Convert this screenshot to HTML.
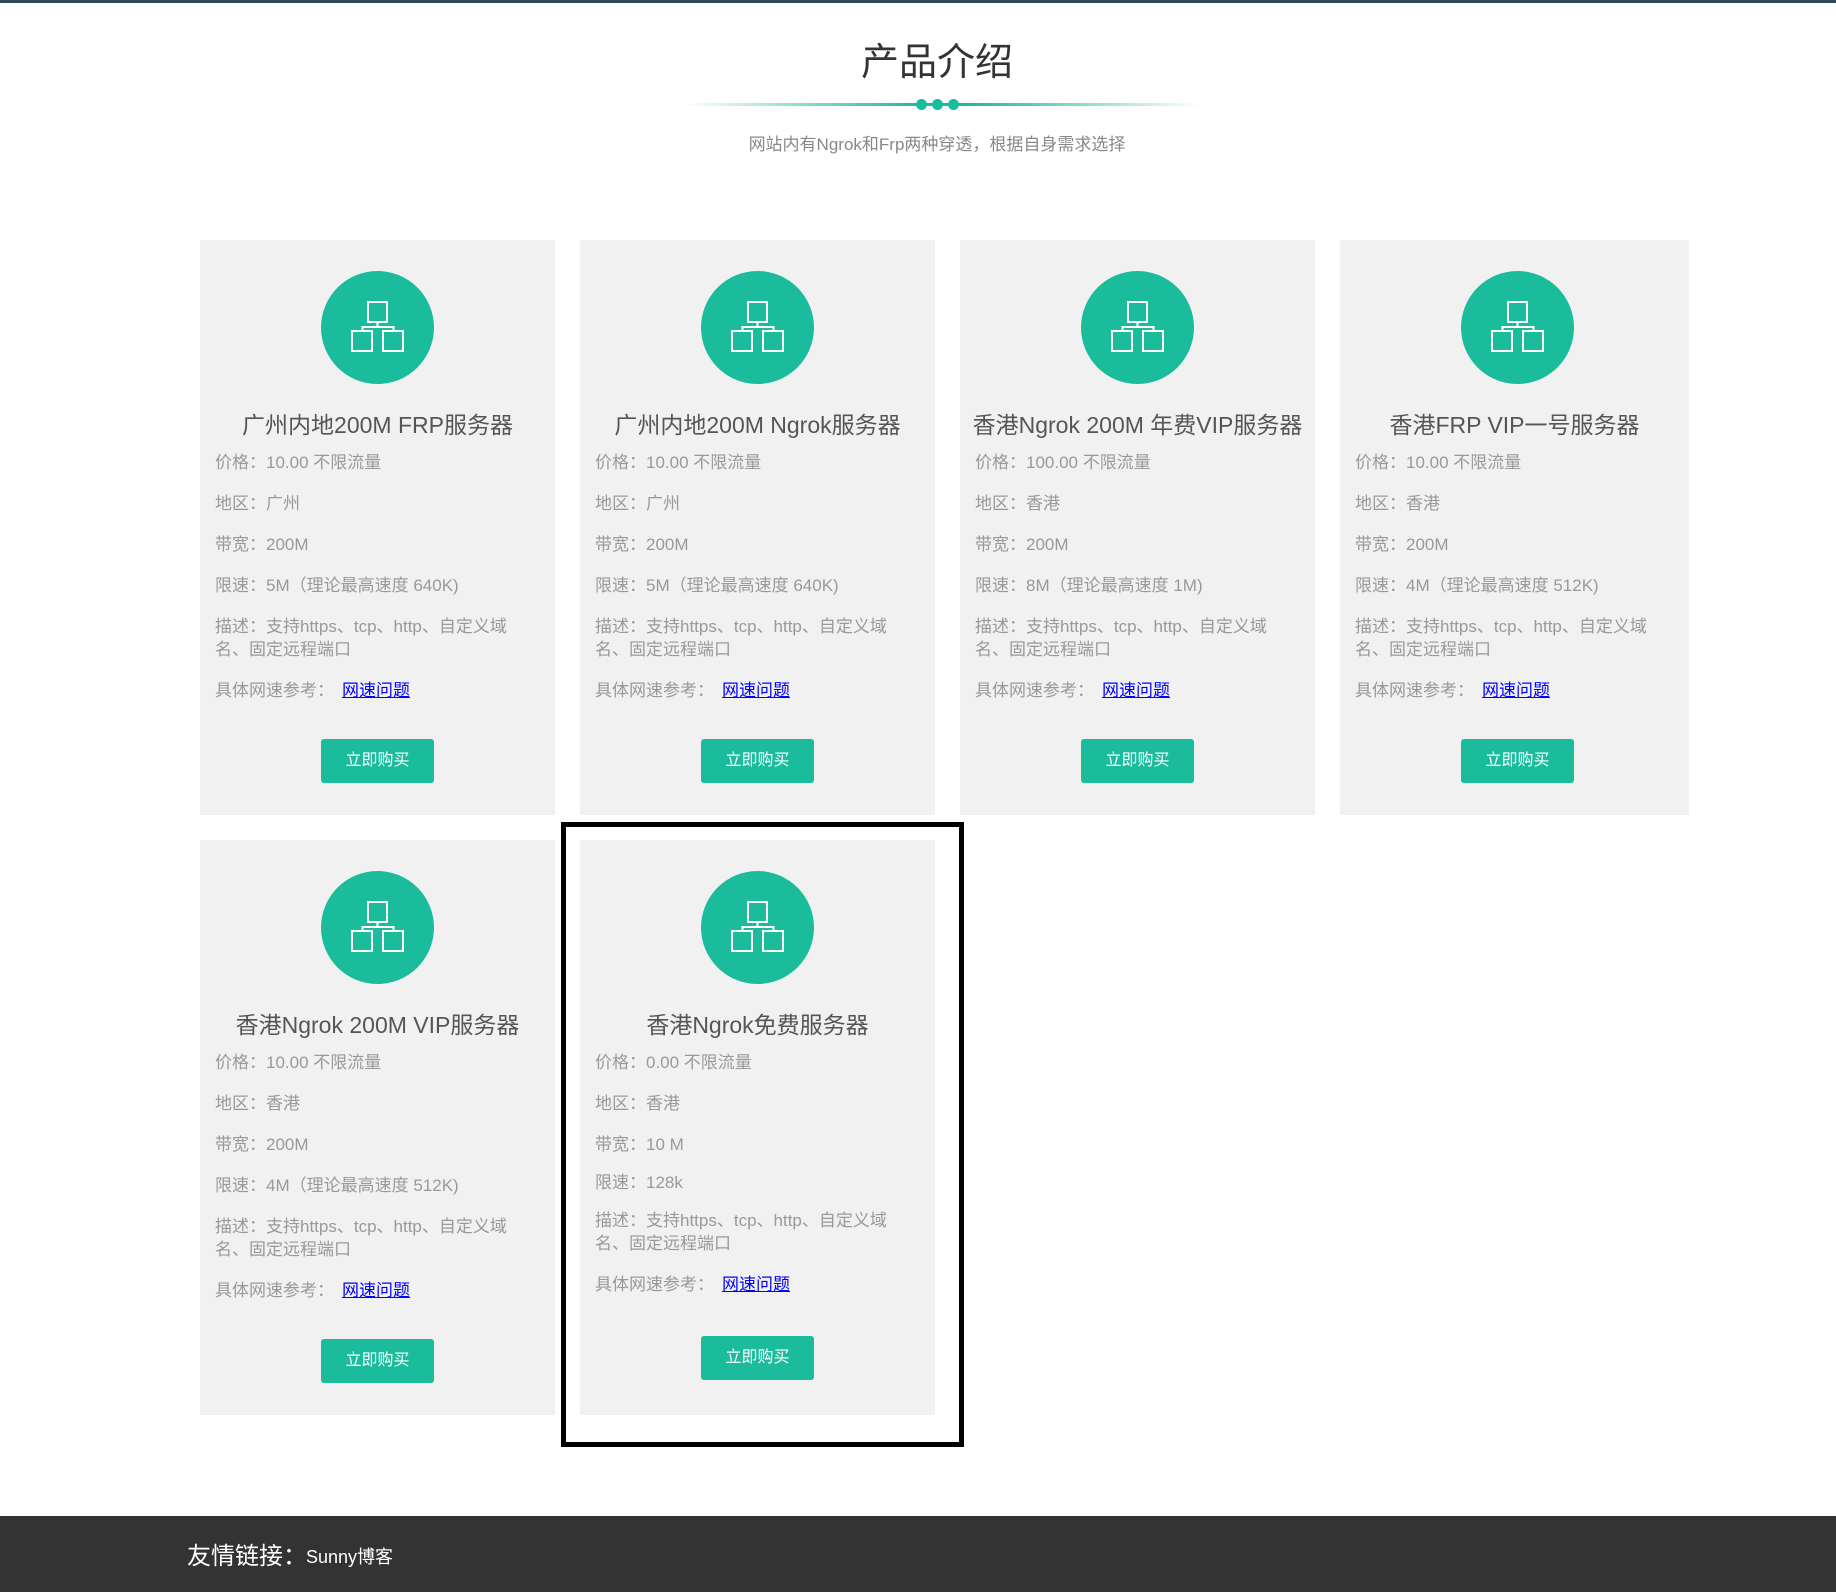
<!DOCTYPE html>
<html><head><meta charset="utf-8"><style>
*{margin:0;padding:0;box-sizing:border-box}
body{width:1836px;height:1592px;position:relative;background:#fff;font-family:"Liberation Sans","Noto Sans CJK SC",sans-serif;overflow:hidden}
.top{position:absolute;left:0;top:0;width:1836px;height:3px;background:#2c4a55}
h1{position:absolute;left:19px;width:1836px;top:37px;text-align:center;font-size:38px;font-weight:normal;color:#333;line-height:52px}
.line{position:absolute;top:103px;left:685px;width:516px;height:3px;background:linear-gradient(to right,rgba(26,188,156,0),#1abc9c 45%,#1abc9c 55%,rgba(26,188,156,0))}
.dot{position:absolute;top:99px;width:11px;height:11px;border-radius:50%;background:#1abc9c}
.sub{position:absolute;top:130px;left:19px;width:1836px;text-align:center;font-size:17px;color:#888}
.card{position:absolute;width:355px;height:575px;background:#f1f1f1}
.circ{position:absolute;top:31px;left:121px;width:113px;height:113px;border-radius:50%;background:#1abc9c}
.circ svg{position:absolute;left:0;top:0}
.t{position:absolute;top:166px;left:0;width:100%;text-align:center;font-size:23px;color:#555;white-space:nowrap}
.body{position:absolute;top:211px;left:15px;right:15px;font-size:17px;color:#999}
.body p{line-height:23px;margin-bottom:18px}
.body p:last-child{margin-top:3px}
.body a{color:#00f;text-decoration:underline;margin-left:8px}
.btn{position:absolute;top:499px;left:121px;width:113px;height:44px;background:#1abc9c;border-radius:3px;color:#fff;font-size:16px;text-align:center;line-height:44px}
.sel{position:absolute;left:561px;top:822px;width:403px;height:625px;border:5px solid #000}
.foot{position:absolute;left:0;top:1516px;width:1836px;height:76px;background:#333;color:#fff}
.foot .a{position:absolute;left:187px;top:26px;font-size:24px;line-height:30px}
.foot .b{position:absolute;left:306px;top:29px;font-size:18px;line-height:24px}
</style></head><body>
<div class="top"></div>
<h1>产品介绍</h1>
<div class="line"></div>
<div class="dot" style="left:916px"></div><div class="dot" style="left:932px"></div><div class="dot" style="left:948px"></div>
<div class="sub">网站内有Ngrok和Frp两种穿透，根据自身需求选择</div>

<div class="card" style="left:200px;top:240px"><div class="circ"><svg width="113" height="113" fill="none" stroke="#fff" stroke-width="2"><rect x="47" y="31" width="19" height="20"/><path d="M56.5 51v5M41.5 60v-4h31v4"/><rect x="31" y="60" width="20" height="20"/><rect x="62" y="60" width="20" height="20"/></svg></div>
<div class="t">广州内地200M FRP服务器</div><div class="body"><p>价格：10.00 不限流量</p><p>地区：广州</p><p>带宽：200M</p><p>限速：5M（理论最高速度 640K)</p><p>描述：支持https、tcp、http、自定义域名、固定远程端口</p><p>具体网速参考：<a>网速问题</a></p></div><div class="btn">立即购买</div></div>

<div class="card" style="left:580px;top:240px"><div class="circ"><svg width="113" height="113" fill="none" stroke="#fff" stroke-width="2"><rect x="47" y="31" width="19" height="20"/><path d="M56.5 51v5M41.5 60v-4h31v4"/><rect x="31" y="60" width="20" height="20"/><rect x="62" y="60" width="20" height="20"/></svg></div>
<div class="t">广州内地200M Ngrok服务器</div><div class="body"><p>价格：10.00 不限流量</p><p>地区：广州</p><p>带宽：200M</p><p>限速：5M（理论最高速度 640K)</p><p>描述：支持https、tcp、http、自定义域名、固定远程端口</p><p>具体网速参考：<a>网速问题</a></p></div><div class="btn">立即购买</div></div>

<div class="card" style="left:960px;top:240px"><div class="circ"><svg width="113" height="113" fill="none" stroke="#fff" stroke-width="2"><rect x="47" y="31" width="19" height="20"/><path d="M56.5 51v5M41.5 60v-4h31v4"/><rect x="31" y="60" width="20" height="20"/><rect x="62" y="60" width="20" height="20"/></svg></div>
<div class="t">香港Ngrok 200M 年费VIP服务器</div><div class="body"><p>价格：100.00 不限流量</p><p>地区：香港</p><p>带宽：200M</p><p>限速：8M（理论最高速度 1M)</p><p>描述：支持https、tcp、http、自定义域名、固定远程端口</p><p>具体网速参考：<a>网速问题</a></p></div><div class="btn">立即购买</div></div>

<div class="card" style="left:1340px;top:240px;width:349px"><div class="circ"><svg width="113" height="113" fill="none" stroke="#fff" stroke-width="2"><rect x="47" y="31" width="19" height="20"/><path d="M56.5 51v5M41.5 60v-4h31v4"/><rect x="31" y="60" width="20" height="20"/><rect x="62" y="60" width="20" height="20"/></svg></div>
<div class="t">香港FRP VIP一号服务器</div><div class="body"><p>价格：10.00 不限流量</p><p>地区：香港</p><p>带宽：200M</p><p>限速：4M（理论最高速度 512K)</p><p>描述：支持https、tcp、http、自定义域名、固定远程端口</p><p>具体网速参考：<a>网速问题</a></p></div><div class="btn">立即购买</div></div>

<div class="card" style="left:200px;top:840px"><div class="circ"><svg width="113" height="113" fill="none" stroke="#fff" stroke-width="2"><rect x="47" y="31" width="19" height="20"/><path d="M56.5 51v5M41.5 60v-4h31v4"/><rect x="31" y="60" width="20" height="20"/><rect x="62" y="60" width="20" height="20"/></svg></div>
<div class="t">香港Ngrok 200M VIP服务器</div><div class="body"><p>价格：10.00 不限流量</p><p>地区：香港</p><p>带宽：200M</p><p>限速：4M（理论最高速度 512K)</p><p>描述：支持https、tcp、http、自定义域名、固定远程端口</p><p>具体网速参考：<a>网速问题</a></p></div><div class="btn">立即购买</div></div>

<div class="card" style="left:580px;top:840px"><div class="circ"><svg width="113" height="113" fill="none" stroke="#fff" stroke-width="2"><rect x="47" y="31" width="19" height="20"/><path d="M56.5 51v5M41.5 60v-4h31v4"/><rect x="31" y="60" width="20" height="20"/><rect x="62" y="60" width="20" height="20"/></svg></div>
<div class="t">香港Ngrok免费服务器</div><div class="body"><p>价格：0.00 不限流量</p><p>地区：香港</p><p style="margin-bottom:15px">带宽：10 M</p><p style="margin-bottom:15px">限速：128k</p><p>描述：支持https、tcp、http、自定义域名、固定远程端口</p><p>具体网速参考：<a>网速问题</a></p></div><div class="btn" style="top:496px">立即购买</div></div>

<div class="sel"></div>
<div class="foot"><span class="a">友情链接：</span><span class="b">Sunny博客</span></div>
</body></html>
